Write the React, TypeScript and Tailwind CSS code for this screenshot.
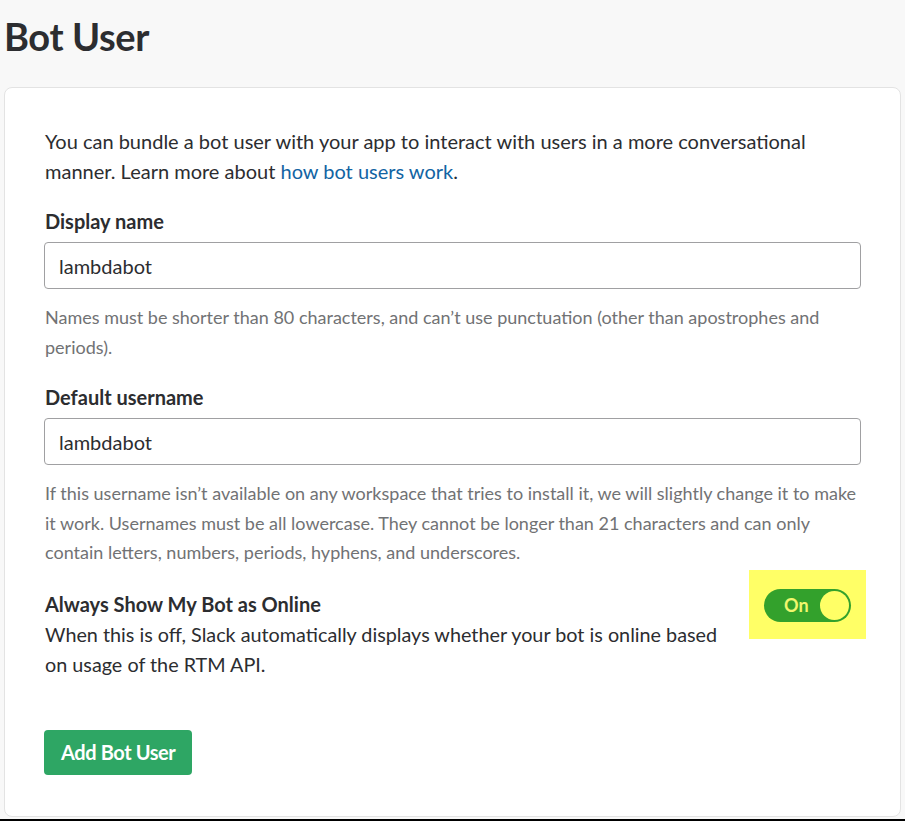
import React from "react";

function Field({ label, value, help }: { label: string; value: string; help: React.ReactNode }) {
  return (
    <div>
      <label className="block text-[20px] font-bold leading-[30px] text-[#2c2d30]">{label}</label>
      <div className="-mx-[1px] mt-[6px] flex h-[47px] items-center rounded-[4px] border border-[#a0a0a2] px-[14px] text-[20px] text-[#2c2d30]">
        {value}
      </div>
      <p className="mt-[14px] text-[18px] leading-[29.5px] text-[#717274]">{help}</p>
    </div>
  );
}

export default function App() {
  return (
    <div className="min-h-[821px] bg-[#f8f8f8] font-['Lato','Open_Sans',sans-serif]">
      <h1 className="px-[4px] pt-[12px] text-[38px] font-bold leading-[48px] tracking-[-0.4px] text-[#2c2d30]">
        Bot User
      </h1>
      <div className="mx-[4px] mt-[27px] h-[730px] rounded-[8px] border border-[#e3e3e3] bg-white px-[40px] pt-[38px]">
        <p className="text-[20px] leading-[30px] text-[#2c2d30]">
          You can bundle a bot user with your app to interact with users in a more conversational manner. Learn more
          about <span className="text-[#1264a3]">how bot users work</span>.
        </p>
        <div className="mt-[20px] flex flex-col gap-[20px]">
          <Field
            label="Display name"
            value="lambdabot"
            help="Names must be shorter than 80 characters, and can’t use punctuation (other than apostrophes and periods)."
          />
          <Field
            label="Default username"
            value="lambdabot"
            help="If this username isn’t available on any workspace that tries to install it, we will slightly change it to make it work. Usernames must be all lowercase. They cannot be longer than 21 characters and can only contain letters, numbers, periods, hyphens, and underscores."
          />
        </div>
        <div className="mt-[21px] flex items-start justify-between">
          <div className="w-[690px] text-[19.8px] leading-[30px] text-[#2c2d30]">
            <div className="text-[20px] font-bold">Always Show My Bot as Online</div>
            <div>When this is off, Slack automatically displays whether your bot is online based on usage of the RTM API.</div>
          </div>
          <div className="-mr-[6px] mt-[-19px] flex h-[69px] w-[117px] items-center justify-center bg-[#ffff66]">
            <div className="mt-[3px] flex h-[33px] w-[87px] items-center justify-between rounded-full bg-[#33a12c] pl-[20px] pr-[2px]">
              <span className="text-[18px] font-bold text-[#f1f66e]">On</span>
              <span className="h-[29px] w-[29px] rounded-full bg-[#ffff66]" />
            </div>
          </div>
        </div>
        <button className="-ml-[1px] mt-[51px] h-[45px] rounded-[4px] bg-[#2ea664] px-[17px] text-[20px] font-bold tracking-[-0.4px] text-white">
          Add Bot User
        </button>
      </div>
      <div className="mt-[2px] h-[2px] bg-black" />
    </div>
  );
}
